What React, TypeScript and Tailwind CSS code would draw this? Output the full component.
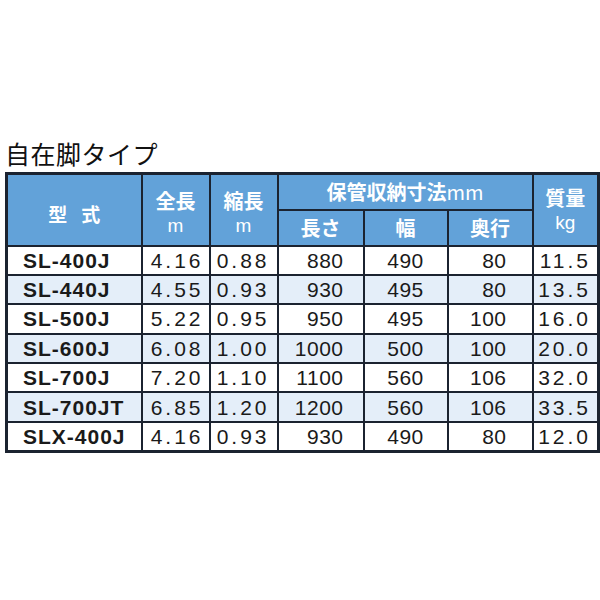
const rows = [
  ["SL-400J", "4.16", "0.88", "880", "490", "80", "11.5"],
  ["SL-440J", "4.55", "0.93", "930", "495", "80", "13.5"],
  ["SL-500J", "5.22", "0.95", "950", "495", "100", "16.0"],
  ["SL-600J", "6.08", "1.00", "1000", "500", "100", "20.0"],
  ["SL-700J", "7.20", "1.10", "1100", "560", "106", "32.0"],
  ["SL-700JT", "6.85", "1.20", "1200", "560", "106", "33.5"],
  ["SLX-400J", "4.16", "0.93", "930", "490", "80", "12.0"],
];

const jp = "font-['Noto_Sans_CJK_JP','Liberation_Sans',sans-serif]";
const num = "font-['Liberation_Sans','Noto_Sans_CJK_JP',sans-serif]";
const head = `border-2 border-[#1b2330] bg-[#62a2d9] p-0 text-center text-white ${jp}`;
const cell = "border-2 border-[#1b2330] p-0 text-[21px] leading-none text-[#1a1a1a]";

// two-line header: Japanese label over its unit
function Stack({ label, unit, className }: { label: string; unit: string; className?: string }) {
  return (
    <div className={`flex flex-col items-center ${className ?? ""}`}>
      <span className="text-[20px] font-bold leading-[29px]">{label}</span>
      <span className={`${num} text-[19px] font-normal leading-[21px]`}>{unit}</span>
    </div>
  );
}

export default function App() {
  return (
    <div className="h-[600px] w-[600px] overflow-hidden bg-white pl-[5px] pt-[136px]">
      <h1 className={`text-[25px] leading-[34px] font-normal tracking-[0.5px] text-[#111] ${jp}`}>
        自在脚タイプ
      </h1>
      <table className="mt-[2px] w-[594px] table-fixed border-collapse border-[3px] border-[#1b2330]">
        <colgroup>
          <col className="w-[135px]" />
          <col className="w-[68px]" />
          <col className="w-[68px]" />
          <col className="w-[86px]" />
          <col className="w-[84px]" />
          <col className="w-[85px]" />
          <col className="w-[66px]" />
        </colgroup>
        <thead>
          <tr className="h-[36px]">
            <th rowSpan={2} className={`${head} text-[19px] font-bold tracking-[14px] pl-[14px] pt-[8px]`}>
              型式
            </th>
            <th rowSpan={2} className={head}>
              <Stack label="全長" unit="m" className="pt-[3px]" />
            </th>
            <th rowSpan={2} className={head}>
              <Stack label="縮長" unit="m" className="pt-[3px]" />
            </th>
            <th colSpan={3} className={`${head} text-[20px] font-bold leading-none`}>
              保管収納寸法<span className="font-normal">mm</span>
            </th>
            <th rowSpan={2} className={head}>
              <Stack label="質量" unit="kg" className="pb-[3px]" />
            </th>
          </tr>
          <tr className="h-[36px]">
            <th className={`${head} text-[20px] font-bold`}>長さ</th>
            <th className={`${head} text-[20px] font-bold`}>幅</th>
            <th className={`${head} text-[20px] font-bold`}>奥行</th>
          </tr>
        </thead>
        <tbody>
          {rows.map((r, i) => (
            <tr key={r[0]} className={`h-[29.4px] ${i % 2 === 1 ? "bg-[#e4eef9]" : "bg-white"}`}>
              <td className={`${cell} ${num} pl-[15px] text-left font-bold tracking-[1px]`}>{r[0]}</td>
              <td className={`${cell} ${num} pr-[5px] text-right tracking-[3px]`}>{r[1]}</td>
              <td className={`${cell} ${num} pr-[7px] text-right tracking-[3px]`}>{r[2]}</td>
              <td className={`${cell} ${num} pr-[19px] text-right tracking-[0.5px]`}>{r[3]}</td>
              <td className={`${cell} ${num} text-center tracking-[0.5px]`}>{r[4]}</td>
              <td className={`${cell} ${num} pr-[25px] text-right tracking-[0.5px]`}>{r[5]}</td>
              <td className={`${cell} ${num} pr-[6px] text-right tracking-[3px]`}>{r[6]}</td>
            </tr>
          ))}
        </tbody>
      </table>
    </div>
  );
}
